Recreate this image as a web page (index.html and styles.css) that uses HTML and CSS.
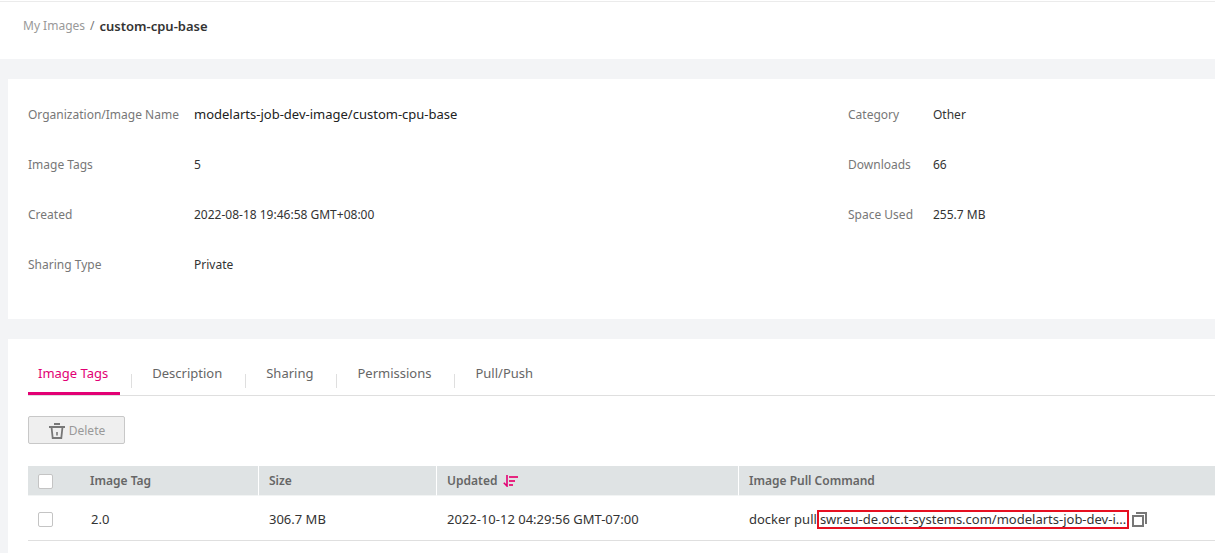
FILE: index.html
```html
<!DOCTYPE html>
<html lang="en">
<head>
<meta charset="utf-8">
<title>custom-cpu-base</title>
<link rel="stylesheet" href="styles.css">
</head>
<body>
<header class="header">
  <nav class="breadcrumb" aria-label="Breadcrumb">
    <a class="crumb-link" href="#images">My Images</a>
    <span class="crumb-sep">/</span>
    <h1 class="crumb-current">custom-cpu-base</h1>
  </nav>
</header>
<main class="main">
  <section class="card details">
    <dl class="facts">
      <dt>Organization/Image Name</dt><dd class="fact-name">modelarts-job-dev-image/custom-cpu-base</dd>
      <dt>Image Tags</dt><dd>5</dd>
      <dt>Created</dt><dd>2022-08-18 19:46:58 GMT+08:00</dd>
      <dt>Sharing Type</dt><dd>Private</dd>
    </dl>
    <dl class="facts facts-side">
      <dt>Category</dt><dd>Other</dd>
      <dt>Downloads</dt><dd>66</dd>
      <dt>Space Used</dt><dd>255.7 MB</dd>
    </dl>
  </section>
  <section class="card tags">
    <nav class="tabs" aria-label="Sections">
      <a class="tab tab-active" href="#tags" aria-current="page">Image Tags</a>
      <a class="tab" href="#description">Description</a>
      <a class="tab" href="#sharing">Sharing</a>
      <a class="tab" href="#permissions">Permissions</a>
      <a class="tab" href="#pull">Pull/Push</a>
    </nav>
    <button class="delete" type="button" disabled>
      <svg width="16" height="16" viewBox="0 0 16 16" fill="none" stroke="#777" aria-hidden="true"><path d="M5 1h6M0 4h16" stroke-width="2"/><path d="M2.5 4l1.2 11h8.6l1.2-11" stroke-width="1.8"/><path d="M8 9v3.5" stroke-width="1.6"/></svg>
      <span>Delete</span>
    </button>
    <table class="table">
      <colgroup><col class="col-check"><col class="col-tag"><col class="col-size"><col class="col-updated"><col></colgroup>
      <thead>
        <tr>
          <th class="check-cell"><input class="check" type="checkbox" aria-label="Select all tags"></th>
          <th>Image Tag</th>
          <th class="ruled">Size</th>
          <th class="ruled"><span class="sort-head">Updated
            <button class="icon-button" type="button" aria-label="Sort by updated"><svg width="15" height="12" viewBox="0 0 15 12" fill="none" stroke="#e6257f" stroke-width="2" aria-hidden="true"><path d="M4 0v11L.8 7.8" stroke="#e20074" stroke-width="1.6"/><path d="M6 2h9M6 6h6M6 10h4"/></svg></button></span></th>
          <th class="ruled">Image Pull Command</th>
        </tr>
      </thead>
      <tbody>
        <tr>
          <td class="check-cell"><input class="check" type="checkbox" aria-label="Select tag 2.0"></td>
          <td>2.0</td>
          <td>306.7 MB</td>
          <td>2022-10-12 04:29:56 GMT-07:00</td>
          <td><div class="command"><span>docker pull</span><span class="marked">swr.eu-de.otc.t-systems.com/modelarts-job-dev-i...</span>
            <button class="icon-button" type="button" aria-label="Copy command"><svg width="15" height="15" viewBox="0 0 15 15" fill="none" stroke="#777" stroke-width="2" aria-hidden="true"><path d="M1 4h10v10H1z"/><path d="M4 1h10v11"/></svg></button></div></td>
        </tr>
      </tbody>
    </table>
  </section>
</main>
</body>
</html>
```
FILE: styles.css
```css
* { box-sizing: border-box; }
body {
  margin: 0;
  padding-top: 1px;
  background: #fff;
  color: #333;
  font: 12px/20px "Noto Sans", "Open Sans", sans-serif;
}
a { text-decoration: none; }
.header {
  padding: 14px 23px 23px;
  border-top: 1px solid #ebebeb;
}
.breadcrumb { display: flex; gap: 5px; }
.crumb-link { color: #999; }
.crumb-sep { color: #777; }
.crumb-current { margin: 0; font-size: 13px; font-weight: 600; line-height: 20px; }
.main {
  display: flex;
  flex-direction: column;
  gap: 20px;
  min-height: calc(100vh - 59px);
  padding: 20px 0 0 8px;
  background: #f3f4f6;
}
.card { background: #fff; padding-left: 20px; }
.details {
  display: grid;
  grid-template-columns: 820fr 367fr;
  padding-top: 26px;
  padding-bottom: 44px;
}
.facts {
  display: grid;
  grid-template-columns: 166px 1fr;
  grid-auto-rows: 20px;
  align-content: start;
  row-gap: 30px;
  margin: 0;
}
.facts-side { grid-template-columns: 85px 1fr; }
.facts dt { color: #777; white-space: nowrap; }
.facts dd { margin: 0; white-space: nowrap; }
.facts .fact-name { font-size: 13px; line-height: 18px; color: #222; }
.tags { flex: 1; }
.tabs {
  display: flex;
  gap: 22px;
  height: 57px;
  padding-top: 24px;
  border-bottom: 1px solid #dfdfdf;
}
.tab {
  position: relative;
  height: 32px;
  padding: 0 12px 0 10px;
  color: #666;
  font-size: 13px;
}
.tab:not(:last-child)::after {
  content: "";
  position: absolute;
  top: 11px;
  right: -12px;
  width: 1px;
  height: 14px;
  background: #dfdfdf;
}
.tab-active { color: #e20074; border-bottom: 3px solid #e20074; }
.delete {
  display: flex;
  align-items: center;
  justify-content: center;
  gap: 4px;
  width: 97px;
  height: 28px;
  margin: 20px 0 22px;
  padding: 1px 0 0 1px;
  background: #efefef;
  border: 1px solid #c8c8c8;
  border-radius: 2px;
  color: #999;
  font: inherit;
}
.table {
  width: 100%;
  table-layout: fixed;
  border-collapse: separate;
  border-spacing: 0;
}
.col-check { width: 52px; }
.col-tag { width: 178px; }
.col-size { width: 178px; }
.col-updated { width: 302px; }
th {
  height: 30px;
  padding: 0 10px;
  background: #dfe3e4;
  border-bottom: 1px solid #f2f4f4;
  color: #666;
  font-weight: 600;
  text-align: left;
}
.ruled { border-left: 1px solid #fff; }
td {
  height: 45px;
  padding: 2px 11px 0;
  border-bottom: 1px solid #dfdfdf;
  font-size: 13px;
  white-space: nowrap;
}
.check-cell { padding: 2px 0 0; }
.check {
  display: block;
  appearance: none;
  width: 15px;
  height: 15px;
  margin: 0 10px;
  background: #fff;
  border: 1px solid #c4c4c4;
  border-radius: 2px;
}
.sort-head { display: flex; align-items: center; gap: 6px; }
.icon-button {
  display: flex;
  flex: none;
  padding: 0;
  background: none;
  border: 0;
}
.command { display: flex; align-items: center; }
.marked {
  height: 19px;
  margin-right: 3px;
  padding: 0 1px;
  border: 2px solid #e60f20;
  line-height: 15px;
}
```
